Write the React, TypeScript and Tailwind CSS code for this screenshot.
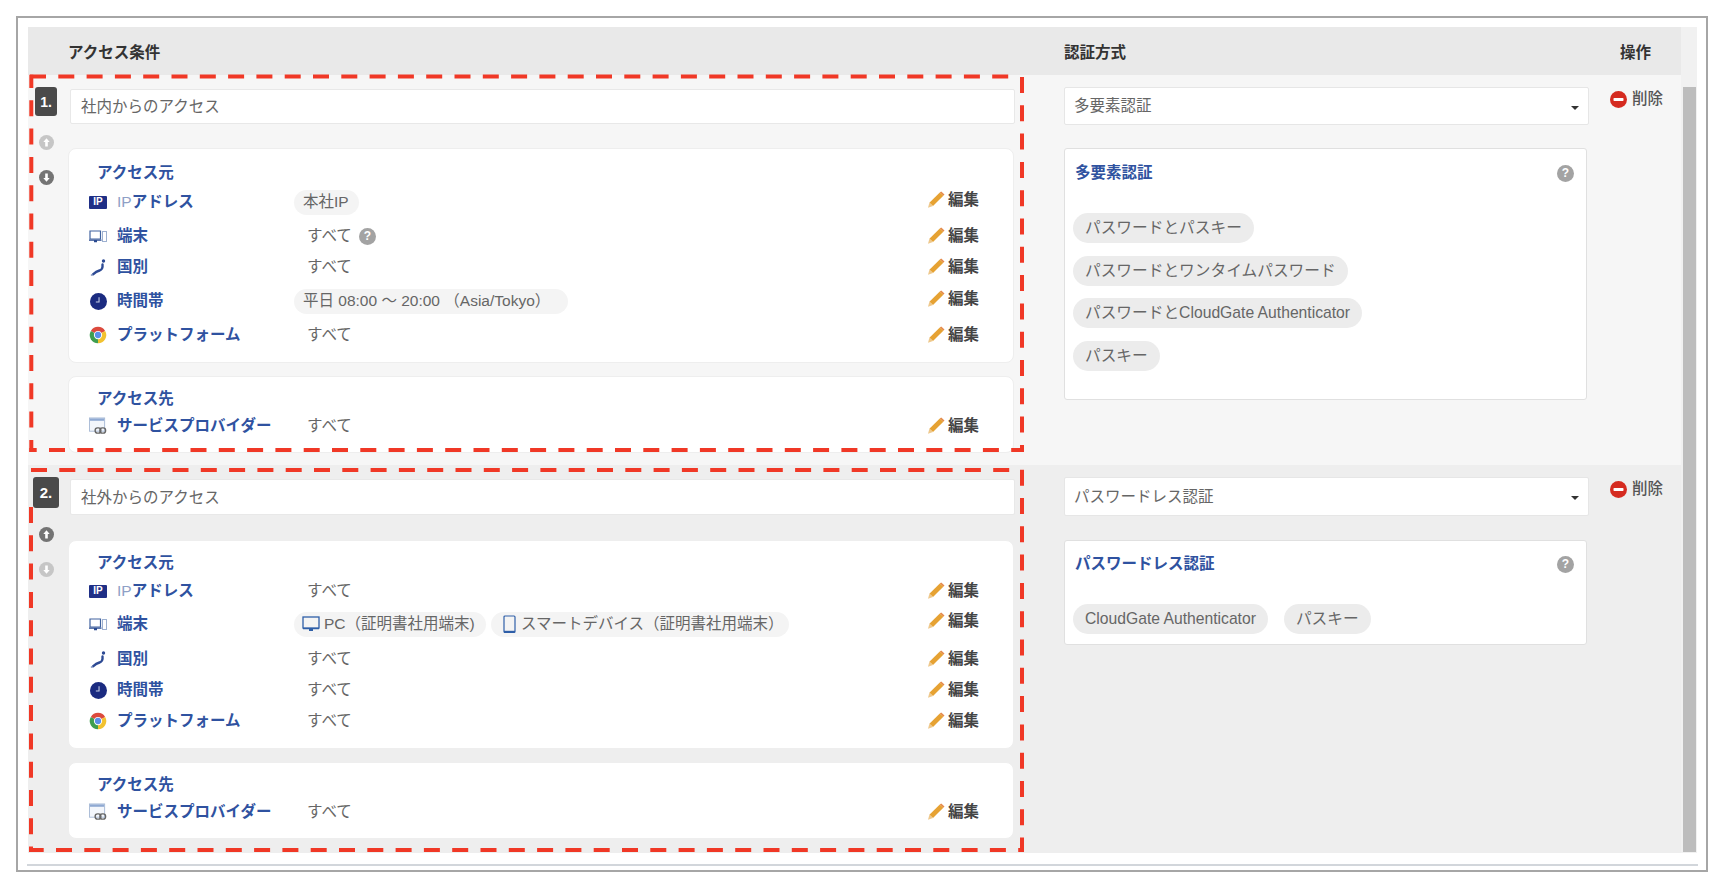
import type { ReactNode } from "react";

const BLUE = "text-[#2f52a0]";

function IpIcon() {
  return (
    <span className="flex h-[13px] w-[18px] items-center justify-center rounded-[1px] bg-[#1f2f86] text-[10px] leading-none font-bold text-white">
      IP
    </span>
  );
}

function DeviceIcon() {
  return (
    <svg width="18" height="15" viewBox="0 0 18 14" fill="none">
      <path d="M1 1.5v8h10.5v-8z" stroke="#41639f" strokeWidth="1.2" />
      <path d="M0 10h12.5v1.3H8v1.5H5v-1.500H0z" fill="#2a4a90" />
      <rect x="13.5" y="2" width="4" height="10" stroke="#9db0d0" strokeWidth="1" />
    </svg>
  );
}

function MapIcon() {
  return (
    <svg width="17" height="19" viewBox="0 0 17 18" fill="none">
      <path d="M12.5 6c.4 3.3-.6 5.300-3 6-2.500.7-4.500 2-6.500 3.800" stroke="#2d4a94" strokeWidth="2.4" strokeLinecap="round" />
      <circle cx="13.5" cy="2.500" r="1.700" fill="#2d4a94" />
      <circle cx="1.800" cy="16.500" r="1.100" fill="#8ea0c6" />
    </svg>
  );
}

function ClockIcon() {
  return (
    <svg width="17" height="17" viewBox="0 0 16 16">
      <circle cx="8" cy="8" r="8" fill="#1b2b80" />
      <path d="M8.500 4v4.500H5.500" stroke="#c8cfe6" strokeWidth="1" fill="none" />
    </svg>
  );
}

function ChromeIcon() {
  return (
    <svg width="18" height="18" viewBox="0 0 24 24">
      <path d="M12 12L2.470 6.500A11 11 0 0 1 21.530 6.500z" fill="#dc4a3d" />
      <path d="M12 12L21.530 6.500A11 11 0 0 1 12 23z" fill="#f2c230" />
      <path d="M12 12L12 23A11 11 0 0 1 2.470 6.500z" fill="#3f9e50" />
      <circle cx="12" cy="12" r="5.500" fill="#fff" />
      <circle cx="12" cy="12" r="4.200" fill="#5b8fe8" />
    </svg>
  );
}

function ServiceIcon() {
  return (
    <svg width="19" height="18" viewBox="0 0 19 18" fill="none">
      <rect x="0.500" y="0.500" width="16" height="14" fill="#f3f6fb" stroke="#a9bbd6" />
      <rect x="1" y="1" width="15" height="2.500" fill="#8fa9d2" />
      <rect x="6.500" y="11" width="6" height="5.500" rx="2.500" stroke="#666" strokeWidth="1.500" />
      <rect x="11.500" y="11" width="6" height="5.500" rx="2.500" stroke="#666" strokeWidth="1.500" />
    </svg>
  );
}

function PencilIcon() {
  return (
    <svg width="18" height="18" viewBox="0 0 18 18" className="shrink-0">
      <path d="M12.800 1.500l3.500 3.300L6 15l-3.600-3.200z" fill="#e6a233" />
      <path d="M12.800 1.500l1.400-1 3.300 3-1.200 1.300z" fill="#e58a4a" />
      <path d="M2.400 11.800L6 15l-5 1.700z" fill="#eec88c" />
    </svg>
  );
}

function HelpIcon() {
  return (
    <span className="flex h-[17px] w-[17px] items-center justify-center rounded-full bg-[#a3a3a3] text-[12px] leading-none font-bold text-white">
      ?
    </span>
  );
}

function ArrowDot({ dir, active }: { dir: "up" | "down"; active: boolean }) {
  return (
    <svg width="15" height="15" viewBox="0 0 15 15">
      <circle cx="7.500" cy="7.500" r="7.500" fill={active ? "#747474" : "#c6c6c6"} />
      <path
        d={dir === "up" ? "M7.500 3.300l3.200 3.700H8.800v4.500H6.200V7H4.300z" : "M7.500 11.700l3.200-3.700H8.800V3.500H6.200V8H4.300z"}
        fill="#fff"
      />
    </svg>
  );
}

function MonitorIcon() {
  return (
    <svg width="18" height="18" viewBox="0 0 18 18" fill="none" className="shrink-0">
      <rect x="1" y="2" width="16" height="11" stroke="#2f5fa8" strokeWidth="1.300" />
      <path d="M1 13h16v1.300H1zM7 14.300h4V16H7z" fill="#2f5fa8" />
    </svg>
  );
}

function PhoneIcon() {
  return (
    <svg width="13" height="19" viewBox="0 0 13 19" fill="none" className="shrink-0">
      <rect x="1" y="1" width="11" height="16.500" rx="1" stroke="#2f5fa8" strokeWidth="1.200" />
      <path d="M1 15.800h11v1.700H1z" fill="#2f5fa8" />
    </svg>
  );
}

function Plain({ children }: { children: ReactNode }) {
  return <span className="flex items-center gap-[7px] pl-[14px]">{children}</span>;
}

function Pill({ children, className = "" }: { children: ReactNode; className?: string }) {
  return (
    <span className={`flex h-[25px] items-center rounded-full bg-[#f4f4f4] px-[9px] whitespace-nowrap ${className}`}>
      {children}
    </span>
  );
}

interface CondRow {
  icon: ReactNode;
  label: ReactNode;
  value: ReactNode;
  gap: string;
  editClass?: string;
}

function Row({ icon, label, value, gap, editClass = "" }: CondRow) {
  return (
    <div className={`flex h-[24px] items-center pr-[34px] pl-[20px] ${gap}`}>
      <span className="flex w-[18px] shrink-0 justify-center">{icon}</span>
      <span className={`ml-[10px] w-[177px] shrink-0 font-bold whitespace-nowrap ${BLUE}`}>{label}</span>
      <div className="flex items-center gap-[5px] text-[#666]">{value}</div>
      <button className={`ml-auto flex items-center gap-[3px] font-bold text-[#444] ${editClass}`}>
        <PencilIcon />
        編集
      </button>
    </div>
  );
}

const ipLabel = (
  <>
    <span className="font-normal text-[#8ea0c6]">IP</span>アドレス
  </>
);

function Chip({ children }: { children: ReactNode }) {
  return (
    <span className="flex h-[30px] w-fit items-center rounded-full bg-[#ececec] px-[12px] text-[15.7px] whitespace-nowrap text-[#666]">
      {children}
    </span>
  );
}

function MethodCard({ title, className, children }: { title: string; className: string; children: ReactNode }) {
  return (
    <div className={`w-[523px] rounded-[3px] border border-[#e0e0e0] bg-white ${className}`}>
      <div className="flex h-[24px] items-center justify-between pr-[12px] pl-[10px]">
        <span className={`font-bold ${BLUE}`}>{title}</span>
        <HelpIcon />
      </div>
      {children}
    </div>
  );
}

function Select({ value, className }: { value: string; className: string }) {
  return (
    <div className={`flex w-[525px] items-center justify-between rounded-[2px] border border-[#e6e6e6] bg-white pr-[9px] pl-[9px] text-[#666] ${className}`}>
      <span>{value}</span>
      <span className="mt-[3px] h-0 w-0 border-x-[4px] border-t-[4px] border-x-transparent border-t-[#333]" />
    </div>
  );
}

function Remove({ className }: { className: string }) {
  return (
    <div className={`ml-[21px] flex h-[20px] items-center gap-[5px] text-[#555] ${className}`}>
      <svg width="17" height="17" viewBox="0 0 17 17">
        <circle cx="8.500" cy="8.500" r="8.500" fill="#d52b20" />
        <rect x="3.500" y="7" width="10" height="3" rx="0.800" fill="#fff" />
      </svg>
      <span className="font-medium">削除</span>
    </div>
  );
}

function Dashes() {
  return (
    <svg className="pointer-events-none absolute top-0 left-0" width="1724" height="890" fill="none" stroke="#f03826" strokeWidth="4" strokeDasharray="16 12.3">
      <path d="M30 76.500H1011" />
      <path d="M31.300 74.700V452" strokeDashoffset="2.700" />
      <path d="M29.300 450H1024" strokeDashoffset="8.600" />
      <path d="M1022 77V452" />
      <path d="M31 470H1011" />
      <path d="M31 507V852" />
      <path d="M29.500 850H1024" strokeDashoffset="1.800" />
      <path d="M1022 469.700V852" />
    </svg>
  );
}

export default function App() {
  return (
    <div className="relative h-[890px] w-[1724px] overflow-hidden bg-white pt-[16px] pl-[16px] font-['Liberation_Sans','Noto_Sans_CJK_JP',sans-serif] text-[15.5px] leading-none">
      <div className="h-[856px] w-[1692px] border-2 border-[#a6a6a6] pt-[9px] pl-[10px]">
        <div className="flex h-[826px]">
          <div className="flex w-[1653px] flex-col">
            {/* Header */}
            <div className="flex h-[48px] items-center bg-[#e9e9e9] pt-[4px] font-bold text-[#333]">
              <span className="w-[1036px] pl-[40px]">アクセス条件</span>
              <span className="w-[556px]">認証方式</span>
              <span>操作</span>
            </div>

            {/* Rule 1 */}
            <div className="flex h-[390px] bg-[#f6f6f6]">
              <div className="flex w-[36px] flex-col items-center">
                <div className="mt-[12px] flex h-[29px] w-[22px] items-center justify-center rounded-[3px] bg-[#4a4a4a] text-[14px] font-bold text-white">
                  1.
                </div>
                <div className="mt-[19px] flex">
                  <ArrowDot dir="up" active={false} />
                </div>
                <div className="mt-[20px] flex">
                  <ArrowDot dir="down" active />
                </div>
              </div>
              <div className="ml-[6px] w-[945px]">
                <input
                  readOnly
                  value="社内からのアクセス"
                  className="mt-[14px] block h-[35px] w-full rounded-[2px] border border-[#e8e8e8] bg-white px-[10px] pb-[3px] text-[#666]"
                />
                <div className="mt-[24px] -ml-[2px] h-[215px] w-[946px] rounded-[8px] border border-[#eeeeee] bg-white pt-[12px]">
                  <div className={`flex h-[24px] items-center pl-[28px] font-bold ${BLUE}`}>アクセス元</div>
                  <Row gap="mt-[5px]" icon={<IpIcon />} label={ipLabel} value={<Pill className="w-[65px]">本社IP</Pill>} editClass="mb-[4px]" />
                  <Row gap="mt-[10px]" icon={<DeviceIcon />} label="端末" value={<span className="-ml-[1px]"><Plain>すべて<HelpIcon /></Plain></span>} />
                  <Row gap="mt-[7px]" icon={<MapIcon />} label="国別" value={<span className="-ml-[1px]"><Plain>すべて</Plain></span>} />
                  <Row gap="mt-[10px]" icon={<ClockIcon />} label="時間帯" value={<Pill className="w-[274px]">平日 08:00 〜 20:00 （Asia/Tokyo）</Pill>} editClass="mb-[4px]" />
                  <Row gap="mt-[10px]" icon={<ChromeIcon />} label="プラットフォーム" value={<span className="-ml-[1px]"><Plain>すべて</Plain></span>} />
                </div>
                <div className="mt-[13px] -ml-[2px] h-[77px] w-[946px] rounded-[8px] border border-[#eeeeee] bg-white pt-[10px]">
                  <div className={`flex h-[24px] items-center pl-[28px] font-bold ${BLUE}`}>アクセス先</div>
                  <Row gap="mt-[3px]" icon={<ServiceIcon />} label="サービスプロバイダー" value={<span className="-ml-[1px]"><Plain>すべて</Plain></span>} />
                </div>
              </div>
              <div className="ml-[49px]">
                <Select value="多要素認証" className="mt-[12px] h-[38px]" />
                <MethodCard title="多要素認証" className="mt-[23px] h-[252px] pt-[12px]">
                  <div className="mt-[28px] flex flex-col gap-[12.5px] pl-[8px]">
                    <Chip>パスワードとパスキー</Chip>
                    <Chip>パスワードとワンタイムパスワード</Chip>
                    <Chip>パスワードとCloudGate Authenticator</Chip>
                    <Chip>パスキー</Chip>
                  </div>
                </MethodCard>
              </div>
              <Remove className="mt-[14px]" />
            </div>

            {/* Rule 2 */}
            <div className="flex h-[388px] bg-[#eeeeee]">
              <div className="flex w-[36px] flex-col items-center">
                <div className="mt-[12px] flex h-[31px] w-[26px] items-center justify-center rounded-[3px] bg-[#4a4a4a] text-[15px] font-bold text-white">
                  2.
                </div>
                <div className="mt-[19px] flex">
                  <ArrowDot dir="up" active />
                </div>
                <div className="mt-[20px] flex">
                  <ArrowDot dir="down" active={false} />
                </div>
              </div>
              <div className="ml-[6px] w-[945px]">
                <input
                  readOnly
                  value="社外からのアクセス"
                  className="mt-[14px] block h-[36px] w-full rounded-[2px] border border-[#e8e8e8] bg-white px-[10px] pb-[3px] text-[#666]"
                />
                <div className="mt-[25px] -ml-[2px] h-[209px] w-[946px] rounded-[8px] border border-[#eeeeee] bg-white pt-[10px]">
                  <div className={`flex h-[24px] items-center pl-[28px] font-bold ${BLUE}`}>アクセス元</div>
                  <Row gap="mt-[4px]" icon={<IpIcon />} label={ipLabel} value={<span className="-ml-[1px]"><Plain>すべて</Plain></span>} />
                  <Row
                    gap="mt-[9px]"
                    icon={<DeviceIcon />}
                    label="端末"
                    value={
                      <>
                        <Pill className="w-[192px] gap-[4px] pl-[8px]">
                          <MonitorIcon />
                          PC（証明書社用端末)
                        </Pill>
                        <Pill className="w-[298px] gap-[5px] pl-[12px]">
                          <PhoneIcon />
                          スマートデバイス（証明書社用端末）
                        </Pill>
                      </>
                    }
                    editClass="mb-[6px]"
                  />
                  <Row gap="mt-[11px]" icon={<MapIcon />} label="国別" value={<span className="-ml-[1px]"><Plain>すべて</Plain></span>} />
                  <Row gap="mt-[7px]" icon={<ClockIcon />} label="時間帯" value={<span className="-ml-[1px]"><Plain>すべて</Plain></span>} />
                  <Row gap="mt-[7px]" icon={<ChromeIcon />} label="プラットフォーム" value={<span className="-ml-[1px]"><Plain>すべて</Plain></span>} />
                </div>
                <div className="mt-[13px] -ml-[2px] h-[77px] w-[946px] rounded-[8px] border border-[#eeeeee] bg-white pt-[10px]">
                  <div className={`flex h-[24px] items-center pl-[28px] font-bold ${BLUE}`}>アクセス先</div>
                  <Row gap="mt-[3px]" icon={<ServiceIcon />} label="サービスプロバイダー" value={<span className="-ml-[1px]"><Plain>すべて</Plain></span>} />
                </div>
              </div>
              <div className="ml-[49px]">
                <Select value="パスワードレス認証" className="mt-[12px] h-[39px]" />
                <MethodCard title="パスワードレス認証" className="mt-[24px] h-[105px] pt-[11px]">
                  <div className="mt-[28px] flex gap-[16px] pl-[8px]">
                    <Chip>CloudGate Authenticator</Chip>
                    <Chip>パスキー</Chip>
                  </div>
                </MethodCard>
              </div>
              <Remove className="mt-[14px]" />
            </div>
          </div>

          {/* Scrollbar */}
          <div className="flex w-[16px] flex-col bg-[#f1f1f1]">
            <div className="mt-[60px] mb-[1px] ml-[2px] w-[13px] flex-1 bg-[#bdbdbd]" />
          </div>
        </div>
        <div className="mt-[11px] -ml-[1px] h-[2px] w-[1671px] bg-[#d2d6db]" />
      </div>
      <Dashes />
    </div>
  );
}
